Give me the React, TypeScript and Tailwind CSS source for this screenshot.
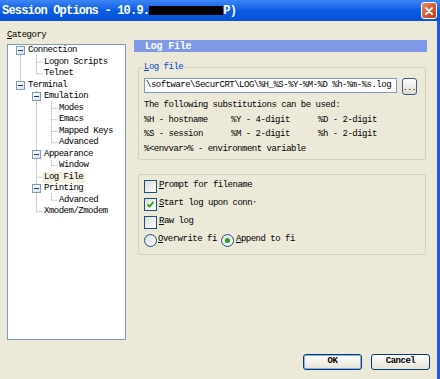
import React from 'react';

const mono = "font-['Liberation_Mono',monospace]";

type Row = { label: string; level: 0 | 1 | 2; box?: boolean; selected?: boolean };

const rows: Row[] = [
  { label: 'Connection', level: 0, box: true },
  { label: 'Logon Scripts', level: 1 },
  { label: 'Telnet', level: 1 },
  { label: 'Terminal', level: 0, box: true },
  { label: 'Emulation', level: 1, box: true },
  { label: 'Modes', level: 2 },
  { label: 'Emacs', level: 2 },
  { label: 'Mapped Keys', level: 2 },
  { label: 'Advanced', level: 2 },
  { label: 'Appearance', level: 1, box: true },
  { label: 'Window', level: 2 },
  { label: 'Log File', level: 1, selected: true },
  { label: 'Printing', level: 1, box: true },
  { label: 'Advanced', level: 2 },
  { label: 'Xmodem/Zmodem', level: 1 },
];

const cy = (i: number) => 5.75 + 11.5 * i;

function TreeLines() {
  // x positions of connector columns, relative to the tree's inner box
  const L0 = 12.5, L1 = 28.5, L2 = 43.5;
  const v = (x: number, a: number, b: number) => `M${x},${cy(a)} V${cy(b)}`;
  const h = (x1: number, x2: number, i: number) => `M${x1},${cy(i)} H${x2}`;
  const d = [
    v(L0, 0, 3),
    v(L1, 0, 2), h(L1, 35, 1), h(L1, 35, 2),
    v(L1, 3, 14), h(L1, 35, 11), h(L1, 35, 14),
    v(L2, 4, 8), h(L2, 50, 5), h(L2, 50, 6), h(L2, 50, 7), h(L2, 50, 8),
    v(L2, 9, 10), h(L2, 50, 10),
    v(L2, 12, 13), h(L2, 50, 13),
  ].join(' ');
  return (
    <svg className="absolute inset-0 pointer-events-none" width="117" height="294">
      <path d={d} fill="none" stroke="#a0a0a0" strokeWidth="1" strokeDasharray="1 1" />
    </svg>
  );
}

function ExpandBox() {
  return (
    <span className="relative z-10 flex items-center justify-center w-[9px] h-[9px] border border-[#7f9db9] bg-gradient-to-br from-white to-[#d8dde8]">
      <span className="w-[5px] h-[1px] bg-[#1a3a7a]" />
    </span>
  );
}

function TreeRow({ row }: { row: Row }) {
  const pad =
    row.level === 0 ? 'pl-[8px]' : row.level === 1 ? (row.box ? 'pl-[24px]' : 'pl-[36px]') : 'pl-[51px]';
  return (
    <div className={`flex items-center h-[11.5px] ${pad}`}>
      {row.box && <ExpandBox />}
      <span
        className={`${row.box ? 'ml-[3px]' : ''} relative z-10 leading-none whitespace-nowrap ${
          row.selected ? 'bg-[#f3f0df] -ml-[2px] px-[2px] py-[1px]' : 'bg-white'
        }`}
      >
        {row.label}
      </span>
    </div>
  );
}

function Checkbox({ checked }: { checked?: boolean }) {
  return (
    <span className="flex items-center justify-center w-[13px] h-[13px] border border-[#1c5180] bg-gradient-to-br from-[#dcdcd7] to-white">
      {checked && (
        <svg width="9" height="9" viewBox="0 0 9 9">
          <path d="M1.5 4.5 L3.5 6.5 L7.5 2" fill="none" stroke="#21a121" strokeWidth="1.8" />
        </svg>
      )}
    </span>
  );
}

function Radio({ checked }: { checked?: boolean }) {
  return (
    <span className="flex items-center justify-center w-[13px] h-[13px] rounded-full border border-[#1c5180] bg-gradient-to-br from-[#dcdcd7] to-white">
      {checked && <span className="w-[5px] h-[5px] rounded-full bg-[#21a121]" />}
    </span>
  );
}

function XPButton({ label, def }: { label: string; def?: boolean }) {
  return (
    <button
      className={`w-[59px] h-[16px] rounded-[3px] border border-[#003c74] bg-gradient-to-b from-white to-[#e6e3d6] flex items-center justify-center text-[9px] tracking-[-0.5px] font-bold text-black ${
        def ? 'shadow-[inset_0_0_0_1px_#89adf0]' : ''
      }`}
    >
      {label}
    </button>
  );
}

export default function App() {
  return (
    <div className={`w-[440px] h-[379px] bg-[#ece9d8] overflow-hidden flex flex-col text-black ${mono} text-[9px] tracking-[-0.5px]`}>
      {/* Title bar */}
      <div className="h-[21px] shrink-0 flex items-center bg-gradient-to-b from-[#3d86f5] via-[#0a5ce4] to-[#0653d6] pl-[2px] pr-[3px]">
        <div className="flex items-center text-white font-bold text-[12px] tracking-[-0.8px] whitespace-pre">
          <span>Session Options - 10.9.</span>
          <span className="inline-block w-[74px] h-[9px] bg-black" />
          <span>P)</span>
        </div>
        <div className="ml-auto w-[16px] h-[17px] rounded-[3px] border border-white bg-gradient-to-br from-[#eb8d6f] via-[#d85a32] to-[#b9401a] flex items-center justify-center">
          <svg width="10" height="10" viewBox="0 0 10 10">
            <path d="M2 2 L8 8 M8 2 L2 8" stroke="white" strokeWidth="1.8" strokeLinecap="round" />
          </svg>
        </div>
      </div>

      <div className="flex-1 flex flex-col border-r-[3px] border-[#1b5be0]">
        {/* Body */}
        <div className="h-[324px] flex pl-[7px]">
          {/* Category column */}
          <div className="w-[119px] pt-[8px]">
            <div className="h-[12px] leading-[12px]">
              <u>C</u>ategory
            </div>
            <div className="relative mt-[3px] h-[296px] border border-[#7f9db9] bg-white">
              <TreeLines />
              {rows.map((r, i) => (
                <TreeRow key={i} row={r} />
              ))}
            </div>
          </div>

          {/* Settings column */}
          <div className="ml-[8px] w-[293px] pt-[19px]">
            <div className="h-[12px] bg-[#7f99e6] flex items-center pl-[11px] text-white font-bold text-[10px] tracking-[-0.2px]">
              Log File
            </div>

            <div className="relative mt-[15px] ml-[4px] mr-[1px] h-[93px] border border-[#d0d0bf] rounded-[3px] pt-[10px] pl-[5px]">
              <span className="absolute -top-[6px] left-[4px] px-[1px] bg-[#ece9d8] text-[#0046d5] leading-[11px]">
                <u>L</u>og file
              </span>
              <div className="flex items-start">
                <div className="w-[253px] h-[15px] border border-[#7f9db9] bg-white flex items-center pl-[1px] whitespace-nowrap overflow-hidden">
                  \software\SecurCRT\LOG\%H_%S-%Y-%M-%D %h-%m-%s.log
                </div>
                <button className="ml-[5px] w-[15px] h-[17px] rounded-[3px] border border-[#3c5a8c] bg-gradient-to-b from-white to-[#dedbd0] flex items-end justify-center pb-[2px] leading-none text-[8px]">
                  ...
                </button>
              </div>
              <div className="mt-[3px] leading-[14.5px]">
                <div>The following substitutions can be used:</div>
                <div className="grid grid-cols-[87px_87px_auto]">
                  <span>%H - hostname</span>
                  <span>%Y - 4-digit</span>
                  <span>%D - 2-digit</span>
                  <span>%S - session</span>
                  <span>%M - 2-digit</span>
                  <span>%h - 2-digit</span>
                </div>
                <div>%&lt;envvar&gt;% - environment variable</div>
              </div>
            </div>

            <div className="mt-[14px] ml-[4px] mr-[1px] h-[81px] border border-[#d0d0bf] rounded-[3px] pt-[2px] pl-[5px]">
              <div className="h-[18px] flex items-center">
                <Checkbox />
                <span className="ml-[2px]">
                  <u>P</u>rompt for filename
                </span>
              </div>
              <div className="h-[18px] flex items-center">
                <Checkbox checked />
                <span className="ml-[2px]">
                  <u>S</u>tart log upon conn&#8901;
                </span>
              </div>
              <div className="h-[18px] flex items-center">
                <Checkbox />
                <span className="ml-[2px]">
                  <u>R</u>aw log
                </span>
              </div>
              <div className="h-[18px] flex items-center">
                <Radio />
                <span className="ml-[1px] w-[63px] overflow-hidden whitespace-nowrap">
                  <u>O</u>verwrite fi
                </span>
                <Radio checked />
                <span className="ml-[2px] whitespace-nowrap">
                  <u>A</u>ppend to fi
                </span>
              </div>
            </div>
          </div>
        </div>

        {/* Buttons */}
        <div className="mt-[9px] flex justify-end gap-[9px] pr-[7px]">
          <XPButton label="OK" def />
          <XPButton label="Cancel" />
        </div>
      </div>
    </div>
  );
}
